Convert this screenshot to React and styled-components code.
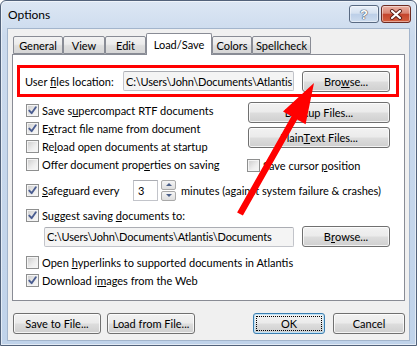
import React from 'react';
import styled, { createGlobalStyle } from 'styled-components';

const FONT = `"Lato", "Liberation Sans", Arial, sans-serif`;

const GlobalStyle = createGlobalStyle`
  html, body {
    margin: 0;
    padding: 0;
    background: #ffffff;
  }
  body {
    font-family: ${FONT};
    font-size: 11px;
    color: #000;
  }
`;

const Window = styled.div`
  position: relative;
  box-sizing: border-box;
  width: 417px;
  height: 346px;
  border: 1px solid #52627a;
  border-radius: 6px 6px 0 0;
  background: linear-gradient(180deg, #dce7f4 0%, #cbdaed 10%, #c0d3ea 100%);
  box-shadow: inset 0 0 0 1px rgba(255, 255, 255, 0.55);
  padding: 0 6px 4px 6px;
  display: flex;
  flex-direction: column;
`;

const TitleBar = styled.div`
  height: 27px;
  display: flex;
  align-items: flex-start;
  justify-content: space-between;
`;

const Title = styled.div`
  margin: 6px 0 0 1px;
  font-size: 12px;
  line-height: 15px;
  color: #000;
`;

const CaptionButtons = styled.div`
  display: flex;
  gap: 2px;
  margin: 4px -1px 0 0;
`;

const CaptionButton = styled.div`
  box-sizing: border-box;
  width: 30px;
  height: 18px;
  border: 1px solid ${p => (p.$close ? '#6e2b22' : '#596a82')};
  border-radius: 3px;
  background: ${p =>
    p.$close
      ? 'linear-gradient(180deg, #eab0a3 0%, #d98573 45%, #c4452d 52%, #d4603f 100%)'
      : 'linear-gradient(180deg, #e9f0f9 0%, #d5e1f0 45%, #bccfe8 52%, #cddcee 100%)'};
  box-shadow: inset 0 0 0 1px rgba(255, 255, 255, 0.45);
  display: flex;
  align-items: center;
  justify-content: center;
`;

const HelpGlyph = styled.span`
  font-family: "Liberation Sans", Arial, sans-serif;
  font-weight: bold;
  font-size: 13px;
  line-height: 13px;
  color: #fff;
  text-shadow: 0 0 1px #3d4b60, 0 0 1px #3d4b60, 0 0 1px #3d4b60;
`;

const Client = styled.div`
  flex: 1;
  box-sizing: border-box;
  background: #f0f0f0;
  border: 1px solid #a3b5cc;
  padding: 4px 4px 0 4px;
  display: flex;
  flex-direction: column;
`;

const TabStrip = styled.div`
  display: flex;
  align-items: flex-end;
  height: 21px;
  padding-left: 1px;
  position: relative;
  z-index: 1;
`;

const Tab = styled.div`
  box-sizing: border-box;
  width: ${p => p.$w}px;
  height: ${p => (p.$active ? 22 : 18)}px;
  margin-bottom: ${p => (p.$active ? -1 : 0)}px;
  border: 1px solid #898c95;
  border-bottom: ${p => (p.$active ? 'none' : '1px solid #898c95')};
  border-radius: 2px 2px 0 0;
  background: ${p =>
    p.$active ? '#ffffff' : 'linear-gradient(180deg, #f3f3f3 0%, #ebebeb 45%, #dedede 55%, #d6d6d6 100%)'};
  display: flex;
  align-items: ${p => (p.$active ? 'flex-start' : 'center')};
  justify-content: center;
  padding-top: ${p => (p.$active ? 3 : 0)}px;
  line-height: 15px;
  white-space: nowrap;
`;

const Panel = styled.div`
  box-sizing: border-box;
  height: 247px;
  background: #ffffff;
  border: 1px solid #898c95;
  padding: 10px 5px 0 4px;
  display: flex;
  flex-direction: column;
`;

const Highlight = styled.div`
  box-sizing: border-box;
  height: 32px;
  border: 3px solid #ff0000;
  display: flex;
  align-items: center;
  padding: 0 6px 0 5px;
`;

const FieldLabel = styled.span`
  width: 98px;
  flex: none;
  white-space: nowrap;
`;

const TextBox = styled.div`
  box-sizing: border-box;
  width: ${p => p.$w}px;
  height: 20px;
  flex: none;
  border: 1px solid #c2c4ca;
  border-top-color: #abadb3;
  border-radius: 2px;
  background: #f4f4f4;
  padding: 0 2px;
  letter-spacing: -0.15px;
  display: flex;
  align-items: center;
  white-space: nowrap;
  overflow: hidden;
`;

const Button = styled.div`
  position: relative;
  box-sizing: border-box;
  width: ${p => p.$w}px;
  height: 21px;
  flex: none;
  border: 1px solid ${p => (p.$default ? '#3c7fb1' : '#707070')};
  border-radius: 3px;
  background: linear-gradient(180deg, #f2f2f2 0%, #ebebeb 48%, #dddddd 52%, #cfcfcf 100%);
  box-shadow: inset 0 0 0 1px ${p => (p.$default ? '#bfe2f7' : 'rgba(255, 255, 255, 0.75)')};
  display: flex;
  align-items: center;
  justify-content: center;
  white-space: nowrap;

  &::after {
    content: '';
    display: ${p => (p.$default ? 'block' : 'none')};
    position: absolute;
    inset: 2px;
    border: 1px dotted #000;
  }
`;

const Body = styled.div`
  padding: 0 9px;
  display: flex;
  flex-direction: column;
`;

const TopGrid = styled.div`
  display: flex;
  justify-content: space-between;
  margin-top: 4px;
`;

const Column = styled.div`
  display: flex;
  flex-direction: column;
`;

const SideColumn = styled.div`
  width: 142px;
  display: flex;
  flex-direction: column;
  gap: 4px;
  margin-top: 1px;
`;

const CheckRow = styled.div`
  display: flex;
  align-items: center;
  gap: 3px;
  height: 18px;
  margin-top: ${p => p.$mt || 0}px;
  margin-left: ${p => p.$ml || 0}px;
  white-space: nowrap;
`;

const Box = styled.span`
  box-sizing: border-box;
  width: 13px;
  height: 13px;
  flex: none;
  border: 1px solid #8e8f8f;
  background: linear-gradient(135deg, #cbcbcb 0%, #eeeeee 60%, #f8f8f8 100%);
  box-shadow: inset 0 0 0 1px #f4f4f4;
  display: flex;
  align-items: center;
  justify-content: center;
`;

const SafeguardRow = styled.div`
  display: flex;
  align-items: center;
  height: 22px;
  margin-top: 5px;
  white-space: nowrap;
`;

const SafeguardLabel = styled.span`
  width: 91px;
  margin-left: 3px;
`;

const SpinEdit = styled.div`
  box-sizing: border-box;
  width: 25px;
  height: 21px;
  border: 1px solid #c2c4ca;
  border-top-color: #abadb3;
  background: #ffffff;
  padding-left: 4px;
  display: flex;
  align-items: center;
`;

const Spinner = styled.div`
  width: 15px;
  height: 21px;
  margin: 0 5px 0 3px;
  display: flex;
  flex-direction: column;
  gap: 1px;
`;

const SpinHalf = styled.div`
  flex: 1;
  box-sizing: border-box;
  border: 1px solid #a9a9a9;
  border-radius: 2px;
  background: linear-gradient(180deg, #f5f5f5 0%, #dedede 100%);
  display: flex;
  align-items: center;
  justify-content: center;

  &::before {
    content: '';
    border-left: 3px solid transparent;
    border-right: 3px solid transparent;
    border-${p => (p.$up ? 'bottom' : 'top')}: 3px solid #4b5f88;
  }
`;

const PathRow = styled.div`
  display: flex;
  align-items: center;
  gap: 8px;
  margin: 2px 0 0 18px;
`;

const ButtonBar = styled.div`
  display: flex;
  justify-content: space-between;
  margin: 12px 0 0 1px;
`;

const ButtonGroup = styled.div`
  display: flex;
  gap: ${p => p.$gap}px;
`;

const Arrow = styled.svg`
  position: absolute;
  top: -1px;
  left: -1px;
  pointer-events: none;
  z-index: 5;
`;

const CheckMark = () => (
  <svg width="9" height="9" viewBox="0 0 9 9">
    <path d="M1.3 4.6 L3.6 7.2 L7.8 1.3" fill="none" stroke="#4a5d91" strokeWidth="1.9" strokeLinecap="round" strokeLinejoin="round" />
  </svg>
);

const Check = ({ checked, children, mt, ml }) => (
  <CheckRow $mt={mt} $ml={ml}>
    <Box>{checked && <CheckMark />}</Box>
    <span>{children}</span>
  </CheckRow>
);

const tabs = [
  { label: 'General', w: 50 },
  { label: 'View', w: 42 },
  { label: 'Edit', w: 41 },
  { label: 'Load/Save', w: 66, active: true },
  { label: 'Colors', w: 40 },
  { label: 'Spellcheck', w: 59 },
];

// arrow from its tail up to the tip next to the Browse button
const arrowPoints = (() => {
  const tail = [240, 214];
  const tip = [314, 83];
  const dx = tip[0] - tail[0];
  const dy = tip[1] - tail[1];
  const len = Math.hypot(dx, dy);
  const u = [dx / len, dy / len];
  const n = [-u[1], u[0]];
  const hw = 3.3;
  const headLen = 40;
  const headW = 13;
  const b = [tip[0] - u[0] * headLen, tip[1] - u[1] * headLen];
  const pts = [
    [tail[0] + n[0] * hw, tail[1] + n[1] * hw],
    [b[0] + n[0] * hw, b[1] + n[1] * hw],
    [b[0] + n[0] * headW, b[1] + n[1] * headW],
    tip,
    [b[0] - n[0] * headW, b[1] - n[1] * headW],
    [b[0] - n[0] * hw, b[1] - n[1] * hw],
    [tail[0] - n[0] * hw, tail[1] - n[1] * hw],
  ];
  return pts.map(p => p.map(v => v.toFixed(1)).join(',')).join(' ');
})();

export default function App() {
  return (
    <>
      <GlobalStyle />
      <Window>
        <TitleBar>
          <Title>Options</Title>
          <CaptionButtons>
            <CaptionButton>
              <HelpGlyph>?</HelpGlyph>
            </CaptionButton>
            <CaptionButton $close>
              <svg width="14" height="11" viewBox="0 0 14 11">
                <path d="M3 2 L11 9 M11 2 L3 9" stroke="#5a1f18" strokeWidth="4" strokeLinecap="round" />
                <path d="M3 2 L11 9 M11 2 L3 9" stroke="#ffffff" strokeWidth="2.2" strokeLinecap="round" />
              </svg>
            </CaptionButton>
          </CaptionButtons>
        </TitleBar>

        <Client>
          <TabStrip>
            {tabs.map(t => (
              <Tab key={t.label} $w={t.w} $active={t.active}>
                {t.label}
              </Tab>
            ))}
          </TabStrip>

          <Panel>
            <Highlight>
              <FieldLabel>
                User <u>f</u>iles location:
              </FieldLabel>
              <TextBox $w={171}>C:\Users\John\Documents\Atlantis</TextBox>
              <Button $w={88} style={{ marginLeft: 8 }}>
                Bro<u>w</u>se...
              </Button>
            </Highlight>

            <Body>
              <TopGrid>
                <Column>
                  <Check checked>
                    Save s<u>u</u>percompact RTF documents
                  </Check>
                  <Check checked>
                    E<u>x</u>tract file name from document
                  </Check>
                  <Check>
                    Re<u>l</u>oad open documents at startup
                  </Check>
                  <Check>
                    Offer document prop<u>e</u>rties on saving
                  </Check>
                </Column>
                <SideColumn>
                  <Button $w={142}>
                    Ba<u>c</u>kup Files...
                  </Button>
                  <Button $w={142}>
                    Plain <u>T</u>ext Files...
                  </Button>
                  <Check mt={4} ml={-1}>
                    Save cursor <u>p</u>osition
                  </Check>
                </SideColumn>
              </TopGrid>

              <SafeguardRow>
                <Box>
                  <CheckMark />
                </Box>
                <SafeguardLabel>
                  <u>S</u>afeguard every
                </SafeguardLabel>
                <SpinEdit>3</SpinEdit>
                <Spinner>
                  <SpinHalf $up />
                  <SpinHalf />
                </Spinner>
                <span>minutes (against system failure &amp; crashes)</span>
              </SafeguardRow>

              <Check checked mt={5}>
                Suggest saving <u>d</u>ocuments to:
              </Check>
              <PathRow>
                <TextBox $w={250}>C:\Users\John\Documents\Atlantis\Documents</TextBox>
                <Button $w={88}>
                  B<u>r</u>owse...
                </Button>
              </PathRow>

              <Check mt={6}>
                Open <u>h</u>yperlinks to supported documents in Atlantis
              </Check>
              <Check checked>
                Download i<u>m</u>ages from the Web
              </Check>
            </Body>
          </Panel>

          <ButtonBar>
            <ButtonGroup $gap={6}>
              <Button $w={88}>Save to File...</Button>
              <Button $w={88}>Load from File...</Button>
            </ButtonGroup>
            <ButtonGroup $gap={8}>
              <Button $w={72} $default>
                OK
              </Button>
              <Button $w={72}>Cancel</Button>
            </ButtonGroup>
          </ButtonBar>
        </Client>

        <Arrow width="417" height="346" viewBox="0 0 417 346">
          <polygon points={arrowPoints} fill="#ff0000" />
        </Arrow>
      </Window>
    </>
  );
}
